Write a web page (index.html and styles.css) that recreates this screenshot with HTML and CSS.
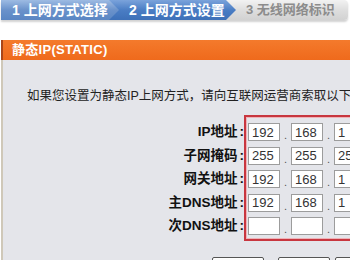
FILE: index.html
```html
<!DOCTYPE html>
<html lang="zh-CN">
<head>
  <meta charset="UTF-8" />
  <title>设置向导 - 上网方式</title>
  <meta name="viewport" content="width=device-width, initial-scale=1.0" />
  <link rel="stylesheet" href="styles.css">
</head>
<body>
  <div class="page">
    <div class="steps">
      <div class="step step-done">1 上网方式选择</div>
      <div class="step step-current">2 上网方式设置</div>
      <div class="step step-todo">3 无线网络标识</div>
    </div>

    <div class="panel">
      <div class="panel-title">静态IP(STATIC)</div>
      <div class="panel-body">
        <p class="intro">如果您设置为静态IP上网方式，请向互联网运营商索取以下信息并填写。</p>

        <div class="ip-form">
          <div class="labels">
            <div class="label">IP地址<span class="colon">:</span></div>
            <div class="label">子网掩码<span class="colon">:</span></div>
            <div class="label">网关地址<span class="colon">:</span></div>
            <div class="label">主DNS地址<span class="colon">:</span></div>
            <div class="label">次DNS地址<span class="colon">:</span></div>
          </div>
          <div class="fields">
            <div class="row"><input type="text" value="192"><span class="dot">.</span><input type="text" value="168"><span class="dot">.</span><input type="text" value="1"><span class="dot">.</span><input type="text" value="100"></div>
            <div class="row"><input type="text" value="255"><span class="dot">.</span><input type="text" value="255"><span class="dot">.</span><input type="text" value="255"><span class="dot">.</span><input type="text" value="0"></div>
            <div class="row"><input type="text" value="192"><span class="dot">.</span><input type="text" value="168"><span class="dot">.</span><input type="text" value="1"><span class="dot">.</span><input type="text" value="1"></div>
            <div class="row"><input type="text" value="192"><span class="dot">.</span><input type="text" value="168"><span class="dot">.</span><input type="text" value="1"><span class="dot">.</span><input type="text" value="1"></div>
            <div class="row"><input type="text" value=""><span class="dot">.</span><input type="text" value=""><span class="dot">.</span><input type="text" value=""><span class="dot">.</span><input type="text" value=""></div>
          </div>
        </div>

        <div class="buttons">
          <button class="btn btn-back">上一步</button>
          <button class="btn">下一步</button>
          <button class="btn">取消</button>
        </div>
      </div>
    </div>
  </div>
</body>
</html>
```

FILE: styles.css
```css
body { margin: 0; background: #fff; overflow: hidden; font-family: "Liberation Sans", "Noto Sans CJK SC", sans-serif; }
.page { width: 440px; padding-left: 1px; }

/* wizard steps */
.steps { display: flex; width: 347px; height: 20px; box-shadow: 0 2px 2px rgba(0, 0, 0, 0.18); border-radius: 0 4px 4px 0; }
.step { box-sizing: border-box; height: 20px; line-height: 20px; font-size: 14px; font-weight: bold; color: #fff; white-space: nowrap; }
.step-done { width: 118px; padding-left: 11px; z-index: 2; background: linear-gradient(#9dbbe3, #6a92cb 50%, #5a86c3); clip-path: polygon(0 0, 108px 0, 118px 50%, 108px 100%, 0 100%); }
.step-current { width: 127px; margin-left: -10px; padding-left: 20px; z-index: 1; background: linear-gradient(#7ba3db, #4a7dc4 50%, #3d70b8); clip-path: polygon(0 0, 117px 0, 127px 50%, 117px 100%, 0 100%); }
.step-todo { flex: 1; margin-left: -10px; padding-left: 20px; font-size: 13px; color: #8c8c8c; background: linear-gradient(#f2f2f2, #dedede 50%, #d2d2d2); border-radius: 0 4px 4px 0; }

/* panel */
.panel { margin-top: 20px; }
.panel-title { height: 20px; line-height: 20px; padding-left: 9px; border-left: 2px solid #a9461a; background: linear-gradient(#f47a2c, #ef6a1c); color: #fff; font-size: 13px; font-weight: bold; letter-spacing: 0.3px; }
.panel-body { height: 200px; padding-top: 28px; box-sizing: border-box; background: #e4e5ea; border-left: 2px solid #cfc8b9; }
.intro { margin: 0 0 11px; padding-left: 24px; font-size: 12.5px; line-height: 16px; color: #222; white-space: nowrap; }

/* ip form */
.ip-form { display: flex; }
.labels { width: 241px; padding-top: 8px; display: flex; flex-direction: column; gap: 5.5px; }
.label { height: 18px; line-height: 18px; text-align: right; font-size: 13.5px; font-weight: bold; color: #111; white-space: nowrap; }
.colon { margin-left: 2px; }
.fields { display: flex; flex-direction: column; gap: 5.5px; padding: 6px 2px 4px; border: 2px solid #c8363f; box-shadow: inset 0 0 0 1px #efb3b8; }
.row { display: flex; height: 18px; }
.row input { box-sizing: border-box; width: 32px; height: 18px; margin: 0; padding: 0 0 0 3px; border: 1px solid #9c9c9c; background: #fff; color: #333; font-family: "Liberation Sans", sans-serif; font-size: 13px; }
.dot { width: 11px; text-align: center; font-size: 11px; line-height: 24px; color: #555; }

/* buttons */
.buttons { display: flex; gap: 5px; margin-top: 16px; padding-left: 209px; }
.btn { width: 52px; height: 22px; padding: 0; border: 1px solid #555; border-radius: 2px; background: linear-gradient(#fff, #dcdcdc); font-size: 12px; color: #222; font-family: "Liberation Sans", "Noto Sans CJK SC", sans-serif; }
.btn-back { margin-right: 9px; }
```
